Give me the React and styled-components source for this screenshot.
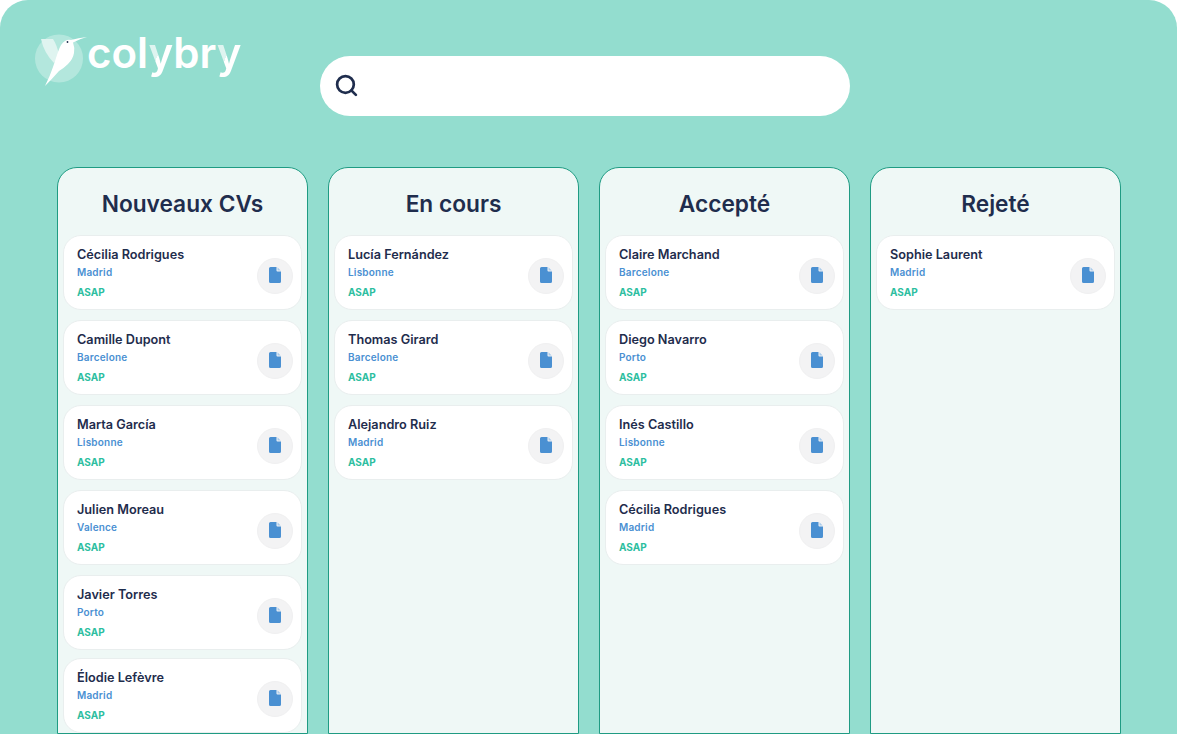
import React from 'react';
import styled, { createGlobalStyle } from 'styled-components';
import { Search } from 'lucide-react';

const GlobalStyle = createGlobalStyle`
  html, body {
    margin: 0;
    padding: 0;
    background: #ffffff;
    overflow: hidden;
    font-family: 'Inter', 'Liberation Sans', sans-serif;
  }
`;

const Page = styled.div`
  height: 734px;
  overflow: hidden;
  background: #93ddcf;
  border-radius: 28px 28px 0 0;
  display: flex;
  flex-direction: column;
  box-sizing: border-box;
`;

const Header = styled.header`
  height: 167px;
  flex: none;
  display: flex;
  align-items: flex-start;
  padding: 56px 0 0 30px;
  box-sizing: border-box;
`;

const Logo = styled.div`
  width: 290px;
  margin-top: -26px;
  display: flex;
  align-items: flex-start;
  flex: none;
`;

const LogoText = styled.span`
  margin: -4px 0 0 -3px;
  font-family: 'Inter', sans-serif;
  font-weight: 600;
  font-size: 42px;
  line-height: 54px;
  color: #ffffff;
`;

const LogoY = styled.span`
  background: linear-gradient(114deg, #dff4f0 47%, #ffffff 47%);
  -webkit-background-clip: text;
  background-clip: text;
  color: transparent;
`;

const SearchBar = styled.div`
  width: 530px;
  height: 60px;
  background: #ffffff;
  border-radius: 30px;
  display: flex;
  align-items: center;
  padding: 0 0 1px 14px;
  box-sizing: border-box;
  color: #1f2d4d;
`;

const Board = styled.main`
  flex: 1;
  min-height: 0;
  display: grid;
  grid-template-columns: repeat(4, 251px);
  column-gap: 20px;
  padding-left: 57px;
`;

const Column = styled.section`
  background: #eff8f6;
  border: 1px solid #1f9b83;
  border-radius: 20px 20px 0 0;
  padding: 0 5px;
  box-sizing: border-box;
  display: flex;
  flex-direction: column;
  overflow: hidden;
`;

const ColumnTitle = styled.h2`
  margin: 0;
  height: 67px;
  padding-top: 3px;
  box-sizing: border-box;
  flex: none;
  display: flex;
  align-items: center;
  justify-content: center;
  font-size: 22.7px;
  font-weight: 600;
  color: #1f2d4d;
`;

const CardList = styled.div`
  display: flex;
  flex-direction: column;
  gap: 10px;
`;

const Card = styled.article`
  height: 75px;
  flex: none;
  margin-top: ${props => (props.$tight ? '-2px' : '0')};
  background: #ffffff;
  border: 1px solid #e9eeee;
  border-radius: 18px;
  box-sizing: border-box;
  display: flex;
  justify-content: space-between;
  align-items: flex-end;
  padding: 10px 8px 15px 13px;
`;

const CardInfo = styled.div`
  align-self: flex-start;
  display: flex;
  flex-direction: column;
`;

const Name = styled.div`
  font-size: 12.7px;
  line-height: 18px;
  font-weight: 600;
  color: #1f2d4d;
`;

const City = styled.div`
  font-size: 10px;
  line-height: 14px;
  margin-top: 1px;
  font-weight: 600;
  letter-spacing: 0.2px;
  color: #4a90d2;
`;

const Availability = styled.div`
  font-size: 10px;
  line-height: 14px;
  margin-top: 6px;
  font-weight: 700;
  color: #2dbe9f;
`;

const FileButton = styled.div`
  width: 36px;
  height: 36px;
  flex: none;
  border-radius: 50%;
  background: #f3f3f4;
  border: 1px solid #f0f0f1;
  padding-bottom: 2px;
  box-sizing: border-box;
  display: flex;
  align-items: center;
  justify-content: center;
`;

const BirdIcon = () => (
  <svg width="60" height="60" viewBox="0 0 60 60">
    <circle cx="29" cy="28.5" r="24" fill="#ffffff" opacity="0.3" />
    <path d="M11 9 L23 9 Q27 15 29 25 L24 33 Q14 23 11 9 Z" fill="#dff4f0" />
    <path
      d="M15 56 Q20 46 23 37 Q26 28 28 22 Q31 13 35 11 Q38 9 41 10 Q48 8 57 7 Q49 9 43 12.5 Q45 18 44 23 Q43 29 38 34 Q34 38 29 41 Q22 49 15 56 Z"
      fill="#ffffff"
    />
    <circle cx="37.5" cy="12" r="0.9" fill="#1f2d4d" />
  </svg>
);

const FileIcon = () => (
  <svg width="12" height="16" viewBox="0 0 12 16">
    <path
      d="M1.5 0 H7.5 V3.5 Q7.5 4.5 8.5 4.5 H12 V14.5 Q12 16 10.5 16 H1.5 Q0 16 0 14.5 V1.5 Q0 0 1.5 0 Z"
      fill="#4a90d2"
    />
    <path d="M8.5 0.3 L11.7 3.5 H8.5 Z" fill="#a9cbeb" />
  </svg>
);

const columns = [
  {
    title: 'Nouveaux CVs',
    cards: [
      ['Cécilia Rodrigues', 'Madrid'],
      ['Camille Dupont', 'Barcelone'],
      ['Marta García', 'Lisbonne'],
      ['Julien Moreau', 'Valence'],
      ['Javier Torres', 'Porto'],
      ['Élodie Lefèvre', 'Madrid', true],
    ],
  },
  {
    title: 'En cours',
    cards: [
      ['Lucía Fernández', 'Lisbonne'],
      ['Thomas Girard', 'Barcelone'],
      ['Alejandro Ruiz', 'Madrid'],
    ],
  },
  {
    title: 'Accepté',
    cards: [
      ['Claire Marchand', 'Barcelone'],
      ['Diego Navarro', 'Porto'],
      ['Inés Castillo', 'Lisbonne'],
      ['Cécilia Rodrigues', 'Madrid'],
    ],
  },
  {
    title: 'Rejeté',
    cards: [['Sophie Laurent', 'Madrid']],
  },
];

const App = () => (
  <Page>
    <GlobalStyle />
    <Header>
      <Logo>
        <BirdIcon />
        <LogoText>
          col<LogoY>y</LogoY>br<LogoY>y</LogoY>
        </LogoText>
      </Logo>
      <SearchBar>
        <Search size={25} strokeWidth={2.6} />
      </SearchBar>
    </Header>
    <Board>
      {columns.map(column => (
        <Column key={column.title}>
          <ColumnTitle>{column.title}</ColumnTitle>
          <CardList>
            {column.cards.map(([name, city, tight]) => (
              <Card key={name} $tight={tight}>
                <CardInfo>
                  <Name>{name}</Name>
                  <City>{city}</City>
                  <Availability>ASAP</Availability>
                </CardInfo>
                <FileButton>
                  <FileIcon />
                </FileButton>
              </Card>
            ))}
          </CardList>
        </Column>
      ))}
    </Board>
  </Page>
);

export default App;
